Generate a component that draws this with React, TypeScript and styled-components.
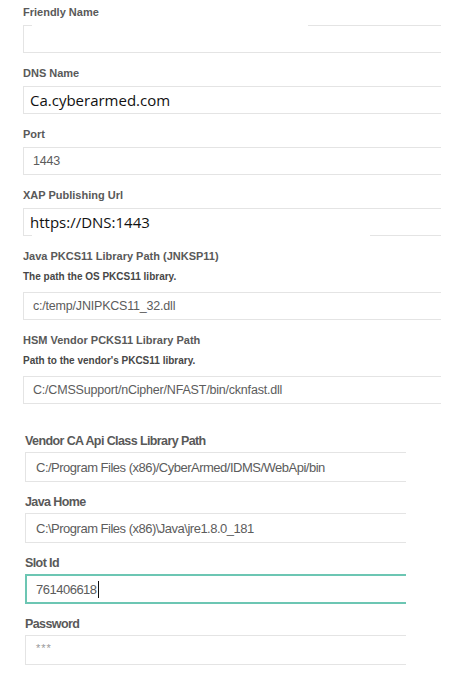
import React from "react";
import styled, { createGlobalStyle, css } from "styled-components";

const GlobalStyle = createGlobalStyle`
  html, body {
    margin: 0;
    padding: 0;
    background: #ffffff;
  }
  body {
    font-family: "Liberation Sans", Arial, sans-serif;
    width: 467px;
    height: 678px;
    overflow: hidden;
  }
`;

const Page = styled.div`
  display: flex;
  flex-flow: column nowrap;
`;

const TopForm = styled.section`
  display: flex;
  flex-flow: column nowrap;
  gap: 12px;
  padding: 4px 0 0 23px;
`;

const BottomForm = styled.section`
  display: flex;
  flex-flow: column nowrap;
  gap: 12px;
  padding: 29px 0 0 25px;
`;

const Group = styled.div`
  display: flex;
  flex-flow: column nowrap;
`;

const Label = styled.label<{ $large?: boolean }>`
  color: #595959;
  font-size: ${(p) => (p.$large ? "12.5px" : "11px")};
  font-weight: bold;
  letter-spacing: ${(p) => (p.$large ? "-0.6px" : "0")};
  line-height: 16px;
  margin-bottom: ${(p) => (p.$large ? "3px" : "5px")};
`;

const Hint = styled.p`
  color: #474747;
  font-size: 10px;
  font-weight: bold;
  line-height: 16px;
  margin: 0 0 7px;
`;

const Box = styled.div<{ $wide?: boolean; $focused?: boolean; $pasted?: boolean }>`
  align-items: center;
  background: #ffffff;
  border: 1px solid #e4e4e4;
  border-right: none;
  box-sizing: border-box;
  color: #5c5c5c;
  display: flex;
  font-size: ${(p) => (p.$wide ? "12.5px" : "13px")};
  height: ${(p) => (p.$wide ? "28px" : "30px")};
  letter-spacing: ${(p) => (p.$wide ? "-0.2px" : "-0.5px")};
  padding-left: ${(p) => (p.$wide ? "9px" : "10px")};
  position: relative;
  width: ${(p) => (p.$wide ? "418px" : "381px")};
  white-space: nowrap;
  ${(p) =>
    p.$focused &&
    css`
      border: 2px solid #6cc6b3;
      border-right: none;
      padding-left: 9px;
    `}
  ${(p) =>
    p.$pasted &&
    css`
      color: #111111;
      font-family: "Open Sans", "Noto Sans", sans-serif;
      font-size: 15px;
      letter-spacing: 0;
      padding-left: 6px;
    `}
`;

const Patch = styled.span<{ $edge: "top" | "bottom"; $width: number }>`
  background: #ffffff;
  height: 2px;
  left: 8px;
  position: absolute;
  width: ${(p) => p.$width}px;
  ${(p) => (p.$edge === "top" ? "top: -1px;" : "bottom: -1px;")}
`;

const Masked = styled.span`
  color: #9a9a9a;
  font-size: 11px;
  letter-spacing: 1px;
  margin-top: -4px;
`;

const Caret = styled.span`
  background: #111111;
  display: inline-block;
  height: 17px;
  margin-left: 1px;
  width: 1px;
`;

interface TopField {
  label: string;
  hint?: string;
  value?: string;
  pasted?: boolean;
  patch?: { edge: "top" | "bottom"; width: number };
}

const topFields: TopField[] = [
  { label: "Friendly Name", patch: { edge: "top", width: 276 } },
  { label: "DNS Name", value: "Ca.cyberarmed.com", pasted: true },
  { label: "Port", value: "1443" },
  {
    label: "XAP Publishing Url",
    value: "https://DNS:1443",
    pasted: true,
    patch: { edge: "bottom", width: 338 },
  },
  {
    label: "Java PKCS11 Library Path (JNKSP11)",
    hint: "The path the OS PKCS11 library.",
    value: "c:/temp/JNIPKCS11_32.dll",
  },
  {
    label: "HSM Vendor PCKS11 Library Path",
    hint: "Path to the vendor's PKCS11 library.",
    value: "C:/CMSSupport/nCipher/NFAST/bin/cknfast.dll",
  },
];

const App: React.FC = () => {
  return (
    <Page>
      <GlobalStyle />
      <TopForm>
        {topFields.map((f) => (
          <Group key={f.label}>
            <Label>{f.label}</Label>
            {f.hint && <Hint>{f.hint}</Hint>}
            <Box $wide $pasted={f.pasted}>
              {f.value}
              {f.patch && <Patch $edge={f.patch.edge} $width={f.patch.width} />}
            </Box>
          </Group>
        ))}
      </TopForm>
      <BottomForm>
        <Group>
          <Label $large>Vendor CA Api Class Library Path</Label>
          <Box>C:/Program Files (x86)/CyberArmed/IDMS/WebApi/bin</Box>
        </Group>
        <Group>
          <Label $large>Java Home</Label>
          <Box>C:\Program Files (x86)\Java\jre1.8.0_181</Box>
        </Group>
        <Group>
          <Label $large>Slot Id</Label>
          <Box $focused>
            761406618
            <Caret />
          </Box>
        </Group>
        <Group>
          <Label $large>Password</Label>
          <Box>
            <Masked>***</Masked>
          </Box>
        </Group>
      </BottomForm>
    </Page>
  );
};

export default App;
